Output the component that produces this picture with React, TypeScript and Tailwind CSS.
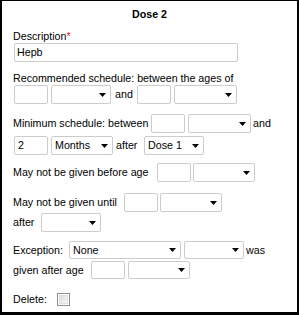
import React from "react";

function Field({ value = "", w = 34, h = 19, className = "" }: { value?: string; w?: number; h?: number; className?: string }) {
  return (
    <div
      className={"shrink-0 flex items-center border border-[#cccccc] rounded-[2px] bg-white pl-[2px] text-black " + className}
      style={{ width: w, height: h }}
    >
      {value}
    </div>
  );
}

function Select({ value = "", w = 62, h = 19, className = "" }: { value?: string; w?: number; h?: number; className?: string }) {
  return (
    <div
      className={"shrink-0 flex items-center border border-[#cccccc] rounded-[2px] bg-white pl-[3px] pr-[4px] text-black " + className}
      style={{ width: w, height: h }}
    >
      <span className="flex-1 whitespace-nowrap">{value}</span>
      <svg width="7" height="4" viewBox="0 0 7 4" className="shrink-0">
        <path d="M0 0H7L3.5 4Z" fill="#000" />
      </svg>
    </div>
  );
}

export default function App() {
  return (
    <div className="w-[299px] h-[315px] bg-white border-black border-solid border-l-2 border-t border-r-2 border-b-[3px] font-['Liberation_Sans',Arial,sans-serif] text-[10.7px] leading-[13px] text-black overflow-hidden">
      <div className="text-center font-bold pt-[7px]">Dose 2</div>
      <div className="pl-[11px]">
        <div className="mt-[9px]">
          Description<span className="text-[#ee2222]">*</span>
        </div>
        <Field value="Hepb" w={224} className="ml-[1px]" />

        <div className="mt-[10px] whitespace-nowrap">Recommended schedule: between the ages of</div>
        <div className="flex items-center h-[19px]">
          <Field className="ml-[1px]" />
          <Select w={60} className="ml-[3px]" />
          <span className="ml-[4px] w-[18px]">and</span>
          <Field className="ml-[4px]" />
          <Select w={63} className="ml-[3px]" />
        </div>

        <div className="flex items-center h-[19px] mt-[10px] whitespace-nowrap">
          <span className="w-[134px]">Minimum schedule: between</span>
          <Field className="ml-[4px]" />
          <Select w={63} className="ml-[3px]" />
          <span className="ml-[2px]">and</span>
        </div>
        <div className="flex items-center h-[19px] mt-[3px] whitespace-nowrap">
          <Field value="2" className="ml-[1px] pl-[3px]" />
          <Select value="Months" w={62} className="ml-[3px]" />
          <span className="ml-[3px] w-[24px]">after</span>
          <Select value="Dose 1" w={60} className="ml-[4px]" />
        </div>

        <div className="flex items-center h-[19px] mt-[8px] whitespace-nowrap">
          <span className="w-[140px]">May not be given before age</span>
          <Field className="ml-[4px]" />
          <Select w={62} className="ml-[2px]" />
        </div>

        <div className="flex items-center h-[19px] mt-[11px] whitespace-nowrap">
          <span className="w-[107px]">May not be given until</span>
          <Field className="ml-[4px]" />
          <Select w={62} className="ml-[2px]" />
        </div>
        <div className="flex items-center h-[19px] mt-[1px] whitespace-nowrap">
          <span className="w-[24px]">after</span>
          <Select w={60} className="ml-[4px]" />
        </div>

        <div className="flex items-center h-[18px] mt-[9px] whitespace-nowrap">
          <span className="w-[52px]">Exception:</span>
          <Select value="None" w={112} h={18} className="ml-[4px]" />
          <Select w={60} h={18} className="ml-[3px]" />
          <span className="ml-[2px]">was</span>
        </div>
        <div className="flex items-center h-[18px] mt-[2px] whitespace-nowrap">
          <span className="w-[74px]">given after age</span>
          <Field h={18} className="ml-[4px]" />
          <Select w={62} h={18} className="ml-[3px]" />
        </div>

        <div className="flex items-center h-[13px] mt-[14px] whitespace-nowrap">
          <span className="w-[40px]">Delete:</span>
          <div className="ml-[4px] w-[13px] h-[13px] border border-[#8f8f8f] bg-white p-[1px]">
            <div className="w-full h-full border border-[#e0e0e0] bg-gradient-to-br from-[#dcdcdc] to-[#f8f8f8]" />
          </div>
        </div>
      </div>
    </div>
  );
}
